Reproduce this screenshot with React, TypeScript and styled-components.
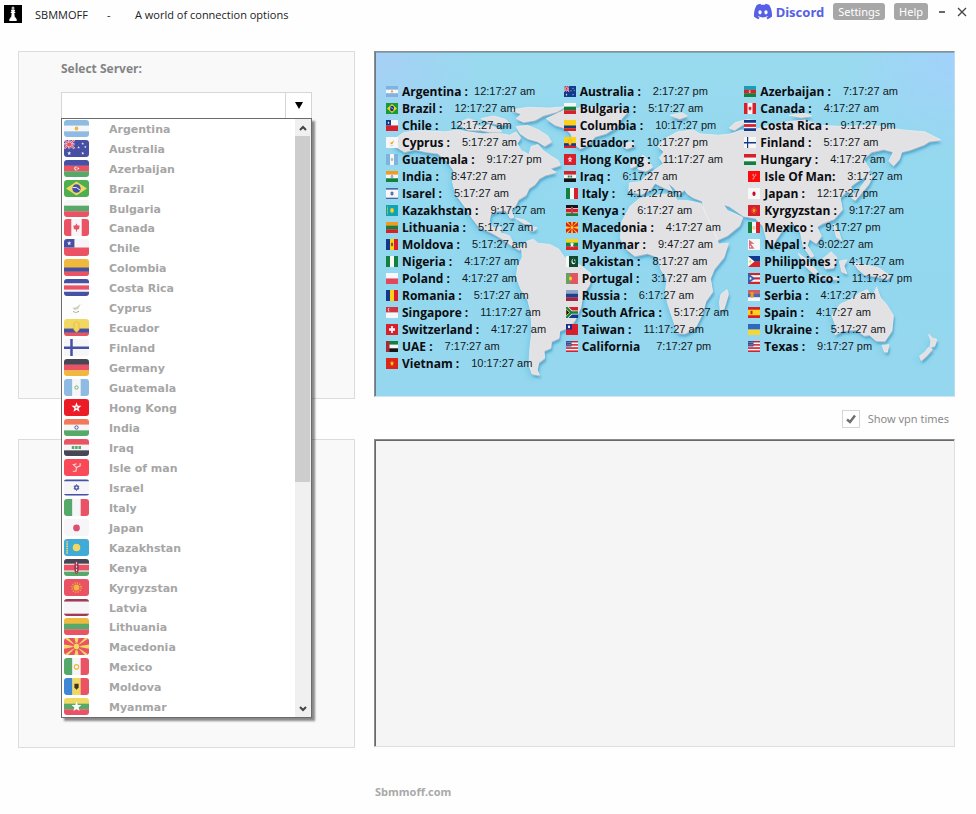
import React, { useState } from 'react';
import styled, { createGlobalStyle } from 'styled-components';
import { SiDiscord } from 'react-icons/si';

const GlobalStyle = createGlobalStyle`
  *, *::before, *::after { box-sizing: border-box; }
  body { margin: 0; background: #fefefe; font-family: "Open Sans", "Noto Sans", sans-serif; }
  button, input, textarea { font: inherit; }
`;

/* ---------- flags ---------- */

type Palette = {
  white: string; red: string; blue: string; sky: string; green: string;
  yellow: string; orange: string; black: string; maroon: string; teal: string;
};

const soft: Palette = {
  white: '#f6f6f8', red: '#ea5364', blue: '#4650a4', sky: '#8fbae2', green: '#56a968',
  yellow: '#f1d862', orange: '#f0b83c', black: '#464655', maroon: '#a03a56', teal: '#3fabd6',
};

const vivid: Palette = {
  white: '#f7f7f7', red: '#d8202c', blue: '#123a8c', sky: '#7fb2e0', green: '#14803e',
  yellow: '#fcd116', orange: '#f39a1f', black: '#151515', maroon: '#b2263c', teal: '#0fa3b5',
};

const rows = (...colors: string[]) =>
  colors.map((c, i) => (
    <rect key={i} x="0" y={(16 / colors.length) * i} width="24" height={16 / colors.length + 0.2} fill={c} />
  ));

const cols = (...colors: string[]) =>
  colors.map((c, i) => (
    <rect key={i} y="0" x={(24 / colors.length) * i} width={24 / colors.length + 0.2} height="16" fill={c} />
  ));

const field = (c: string) => <rect width="24" height="16" fill={c} />;
const star = (cx: number, cy: number, r: number, fill: string) => {
  const pts = Array.from({ length: 10 }, (_, i) => {
    const a = -Math.PI / 2 + (i * Math.PI) / 5;
    const d = i % 2 ? r * 0.42 : r;
    return `${cx + d * Math.cos(a)},${cy + d * Math.sin(a)}`;
  });
  return <polygon points={pts.join(' ')} fill={fill} />;
};
const sun = (r: number, fill: string) => (
  <>
    <circle cx="12" cy="8" r={r + 1.6} fill="none" stroke={fill} strokeWidth="1.4" strokeDasharray="1 1.3" />
    <circle cx="12" cy="8" r={r} fill={fill} />
  </>
);
const bars = (p: Palette) => rows(p.red, p.white, p.red, p.white, p.red, p.white, p.red);

const flags: Record<string, (p: Palette) => React.ReactNode> = {
  ar: p => <>{rows(p.sky, p.white, p.sky)}<circle cx="12" cy="8" r="1.8" fill={p.orange} /></>,
  au: p => (
    <>
      {field(p.blue)}
      <path d="M0 0L10 8M10 0L0 8M5 0V8M0 4H10" stroke={p.white} strokeWidth="2" />
      <path d="M0 0L10 8M10 0L0 8M5 0V8M0 4H10" stroke={p.red} strokeWidth="1" />
      {star(5, 12.5, 2, p.white)}{star(14, 7, 1.3, p.white)}{star(18, 3.5, 1.3, p.white)}
      {star(20.5, 6.5, 1.3, p.white)}{star(18, 12.5, 1.5, p.white)}
    </>
  ),
  az: p => <>{rows(p.blue, p.red, p.green)}<circle cx="11.6" cy="8" r="1.8" fill={p.white} /><circle cx="12.1" cy="8" r="1.2" fill={p.red} />{star(13.8, 8, 1.1, p.white)}</>,
  azv: p => <>{rows(p.teal, p.red, p.green)}<circle cx="11.6" cy="8" r="2" fill={p.white} /><circle cx="12.2" cy="8" r="1.3" fill={p.red} /></>,
  br: p => <>{field(p === soft ? '#4fae50' : '#149b3c')}<path d="M12 1.5L22 8L12 14.5L2 8Z" fill={p.yellow} /><circle cx="12" cy="8" r="4" fill={p.blue} /><path d="M8.3 7Q12 6 15.6 9.6" stroke={p.white} strokeWidth=".9" fill="none" /></>,
  bg: p => rows(p.white, p.green, p.red),
  ca: p => <>{field(p.white)}<rect width="7" height="16" fill={p.red} /><rect x="17" width="7" height="16" fill={p.red} /><path d="M12 4L13 6L15 6L14.5 9.5L12.4 10V12H11.6V10L9.5 9.5L9 6L11 6Z" fill={p.red} /></>,
  cl: p => <>{rows(p.white, p.red)}<rect width="10" height="8" fill={p.blue} />{star(5, 4, 2.2, p.white)}</>,
  co: p => <>{field(p === soft ? p.orange : p.yellow)}<rect y="8" width="24" height="4" fill={p.blue} /><rect y="12" width="24" height="4" fill={p.red} /></>,
  cr: p => <>{field(p.blue)}<rect y="4" width="24" height="8" fill={p.white} /><rect y="6" width="24" height="4" fill={p.red} /></>,
  cy: p => <>{field(p === soft ? '#fdfdfd' : p.white)}<path d="M8 8.5L12 7.5L16 4.5L14 9L10.5 10.5Z" fill={p === soft ? '#cfcfc4' : p.orange} /><path d="M9 11.5Q11 14 15 11" stroke="#8e9c82" fill="none" strokeDasharray="1.4 .8" /></>,
  ec: p => <>{field(p.yellow)}<rect y="9" width="24" height="4" fill={p.blue} /><rect y="13" width="24" height="3" fill={p.red} /><path d="M9.5 4L12 2.5L14.5 4V10L12 12.5L9.5 10Z" fill={p.yellow} stroke={p.orange} strokeWidth=".8" /></>,
  fi: p => <>{field(p.white)}<path d="M0 8.3H24M7.2 0V16" stroke={p.blue} strokeWidth="2.4" /></>,
  de: p => rows(p.black, p.red, p.orange),
  gt: p => <>{cols(p.sky, p.white, p.sky)}<circle cx="12" cy="8" r="1.6" fill={p.white} stroke={p.green} strokeWidth=".8" /></>,
  hk: p => <>{field(p === soft ? '#ec1c26' : p.red)}{star(12, 8, 5, '#fff')}<circle cx="12" cy="8" r="1" fill={p.red} /></>,
  in: p => <>{rows(p === soft ? '#f3795c' : p.orange, p.white, p.green)}<circle cx="12" cy="8" r="1.6" fill="none" stroke={p.blue} strokeWidth=".9" /></>,
  iq: p => <>{rows(p.red, p.white, p.black)}<path d="M7.5 8H16.5" stroke={p.green} strokeWidth="2.6" strokeDasharray="2.4 .8" /></>,
  im: p => <>{field(p === soft ? '#fb4a57' : '#fb0d0d')}<path d="M12 8L9 5.5L12 4.5M12 8L15.5 6.5L15.5 4M12 8L11.5 11.5L8.5 11.5" stroke="#f4d7da" strokeWidth="1.1" fill="none" /></>,
  il: p => <>{field(p.white)}<path d="M0 1.2H24M0 14.8H24" stroke={p.blue} strokeWidth="1.6" /><path d="M12 5.2L14.4 9.4H9.6ZM12 10.9L9.6 6.7H14.4Z" fill="none" stroke={p.blue} strokeWidth=".9" /></>,
  it: p => cols(p.green, p.white, p.red),
  jp: p => <>{field(p.white)}<circle cx="12" cy="8.4" r="3.2" fill={p === soft ? '#dc4f72' : '#bf0a34'} /></>,
  kz: p => <>{field(p.teal)}<circle cx="12" cy="8" r="3.6" fill={p.yellow} /><path d="M3 2V14" stroke={p.yellow} strokeWidth="1.6" strokeDasharray="1.4 .7" /></>,
  ke: p => <>{field(p.white)}<rect width="24" height="4.4" fill={p.black} /><rect y="5.4" width="24" height="5.4" fill={p.red} /><rect y="11.9" width="24" height="4.1" fill={p.green} /><ellipse cx="12" cy="8" rx="2.3" ry="6" fill={p.maroon} /><path d="M12 3V13" stroke={p.white} strokeWidth=".8" strokeDasharray="2 1.2" /></>,
  kg: p => <>{field(p.red)}{sun(2.8, p.orange)}</>,
  lv: p => <>{field(p.white)}<rect width="24" height="2.4" fill={p.maroon} /><rect y="13.8" width="24" height="2.2" fill={p.maroon} /></>,
  lt: p => rows(p.orange, p.green, p.red),
  mk: p => <>{field(p.red)}<path d="M12 8L0 0H4ZM12 8L24 0H20ZM12 8L0 16H4ZM12 8L24 16H20ZM12 8L10 0H14ZM12 8L10 16H14ZM12 8L0 6V10ZM12 8L24 6V10Z" fill={p.yellow} /><circle cx="12" cy="8" r="3.2" fill={p.yellow} stroke={p.red} strokeWidth=".9" /></>,
  mx: p => <>{cols(p.green, p.white, p.red)}<circle cx="12" cy="8.4" r="2.1" fill="none" stroke={p.orange} strokeWidth="1.1" /></>,
  md: p => <>{cols(p === soft ? '#3f86d6' : p.blue, p.yellow, p.red)}<path d="M10 5.5H14V9L12 11L10 9Z" fill={p === soft ? '#3c3520' : '#93541d'} /></>,
  mm: p => <>{rows(p.yellow, p.green, p.red)}{star(12, 8.2, 5, '#fff')}</>,
  hu: p => rows(p.red, p.white, p.green),
  np: p => <>{field(p.white)}<path d="M2 1L13 7H6L13 14H2Z" fill="#d8707c" /><circle cx="5" cy="11" r="1.3" fill={p.white} /></>,
  ng: p => cols(p.green, p.white, p.green),
  pk: p => <>{field('#0b4a2c')}<rect width="6" height="16" fill={p.white} /><circle cx="15" cy="8" r="4" fill={p.white} /><circle cx="16.2" cy="7" r="3.3" fill="#0b4a2c" />{star(17.5, 6, 1.8, p.white)}</>,
  ph: p => <>{rows(p.blue, p.red)}<path d="M0 0L13 8L0 16Z" fill={p.white} /><circle cx="4.4" cy="8" r="1.8" fill={p.yellow} /></>,
  pl: p => rows(p.white, '#e4475c'),
  pt: p => <>{field('#e25563')}<rect width="9" height="16" fill="#6a9d6a" /><circle cx="9" cy="8" r="3" fill={p.yellow} /></>,
  pr: p => <>{rows(p.red, p.white, p.red, p.white, p.red)}<path d="M0 0L14 8L0 16Z" fill="#2f62b5" />{star(5, 8, 3, p.white)}</>,
  ro: p => cols(p.blue, p.yellow, p.red),
  ru: p => rows('#8fa5cb', '#1d3f8e', '#9f2740'),
  rs: p => <>{rows('#d25c66', '#4a69a8', p.white)}<path d="M5 3H11V9L8 12L5 9Z" fill={p.orange} /></>,
  sg: p => <>{rows('#cf3440', p.white)}<circle cx="6" cy="4" r="2.5" fill={p.white} /><circle cx="7.2" cy="4" r="2.1" fill="#cf3440" /></>,
  za: p => <>{rows(p.red, p.blue)}<path d="M0 0L11 8L0 16M11 8H24" stroke={p.white} strokeWidth="6" fill="none" /><path d="M0 0L11 8L0 16M11 8H24" stroke={p.green} strokeWidth="3.6" fill="none" /><path d="M0 3L7 8L0 13Z" fill={p.black} stroke={p.yellow} strokeWidth="1" /></>,
  es: p => <>{field(p.red)}<rect y="4" width="24" height="8" fill={p.yellow} /><rect x="5" y="5.5" width="4" height="5" fill={p.maroon} /></>,
  ch: p => <>{field(p.red)}<path d="M12 3V13M6 8H18" stroke={p.white} strokeWidth="3.4" /></>,
  tw: p => <>{field(p.red)}<rect width="12" height="8" fill="#1c2c8c" /><circle cx="6" cy="4" r="2.2" fill={p.white} /></>,
  ua: p => rows('#2c6ac0', '#f2d63c'),
  ae: p => <>{rows(p.green, p.white, p.black)}<rect width="7" height="16" fill="#a92935" /></>,
  us: p => <>{bars(p)}<rect width="11" height="8" fill="#3b4b8e" /><path d="M1.5 2.2H10M1.5 5.6H10" stroke={p.white} strokeWidth="1" strokeDasharray="1.2 1" /></>,
  vn: p => <>{field('#dc2519')}{star(12, 8, 4.6, p.yellow)}</>,
};

const FlagSvg = styled.svg<{ $small?: boolean }>`
  display: block;
  flex: none;
  width: ${p => (p.$small ? 12 : 25)}px;
  height: ${p => (p.$small ? 11 : 17)}px;
  border-radius: ${p => (p.$small ? 0 : 3)}px;
`;

const Flag = ({ code, small }: { code: string; small?: boolean }) => (
  <FlagSvg $small={small} viewBox="0 0 24 16" preserveAspectRatio="none" aria-hidden="true">
    {flags[code](small ? vivid : soft)}
  </FlagSvg>
);

/* ---------- data ---------- */

const servers: [string, string][] = [
  ['ar', 'Argentina'], ['au', 'Australia'], ['az', 'Azerbaijan'], ['br', 'Brazil'], ['bg', 'Bulgaria'],
  ['ca', 'Canada'], ['cl', 'Chile'], ['co', 'Colombia'], ['cr', 'Costa Rica'], ['cy', 'Cyprus'],
  ['ec', 'Ecuador'], ['fi', 'Finland'], ['de', 'Germany'], ['gt', 'Guatemala'], ['hk', 'Hong Kong'],
  ['in', 'India'], ['iq', 'Iraq'], ['im', 'Isle of man'], ['il', 'Israel'], ['it', 'Italy'],
  ['jp', 'Japan'], ['kz', 'Kazakhstan'], ['ke', 'Kenya'], ['kg', 'Kyrgyzstan'], ['lv', 'Latvia'],
  ['lt', 'Lithuania'], ['mk', 'Macedonia'], ['mx', 'Mexico'], ['md', 'Moldova'], ['mm', 'Myanmar'],
];
const compactRows = ['bg', 'lv'];

type Clock = [code: string, name: string, time: string];
const clockColumns: { indentFrom: number; items: Clock[] }[] = [
  {
    indentFrom: 99,
    items: [
      ['ar', 'Argentina :', '12:17:27 am'], ['br', 'Brazil :', '12:17:27 am'], ['cl', 'Chile :', '12:17:27 am'],
      ['cy', 'Cyprus :', '5:17:27 am'], ['gt', 'Guatemala :', '9:17:27 pm'], ['in', 'India :', '8:47:27 am'],
      ['il', 'Isarel :', '5:17:27 am'], ['kz', 'Kazakhstan :', '9:17:27 am'], ['lt', 'Lithuania :', '5:17:27 am'],
      ['md', 'Moldova :', '5:17:27 am'], ['ng', 'Nigeria :', '4:17:27 am'], ['pl', 'Poland :', '4:17:27 am'],
      ['ro', 'Romania :', '5:17:27 am'], ['sg', 'Singapore :', '11:17:27 am'], ['ch', 'Switzerland :', '4:17:27 am'],
      ['ae', 'UAE :', '7:17:27 am'], ['vn', 'Vietnam :', '10:17:27 am'],
    ],
  },
  {
    indentFrom: 6,
    items: [
      ['au', 'Australia :', '2:17:27 pm'], ['bg', 'Bulgaria :', '5:17:27 am'], ['co', 'Columbia :', '10:17:27 pm'],
      ['ec', 'Ecuador :', '10:17:27 pm'], ['hk', 'Hong Kong :', '11:17:27 am'], ['iq', 'Iraq :', '6:17:27 am'],
      ['it', 'Italy :', '4:17:27 am'], ['ke', 'Kenya :', '6:17:27 am'], ['mk', 'Macedonia :', '4:17:27 am'],
      ['mm', 'Myanmar :', '9:47:27 am'], ['pk', 'Pakistan :', '8:17:27 am'], ['pt', 'Portugal :', '3:17:27 am'],
      ['ru', 'Russia :', '6:17:27 am'], ['za', 'South Africa :', '5:17:27 am'], ['tw', 'Taiwan :', '11:17:27 am'],
      ['us', 'California', '7:17:27 pm'],
    ],
  },
  {
    indentFrom: 5,
    items: [
      ['azv', 'Azerbaijan :', '7:17:27 am'], ['ca', 'Canada :', '4:17:27 am'], ['cr', 'Costa Rica :', '9:17:27 pm'],
      ['fi', 'Finland :', '5:17:27 am'], ['hu', 'Hungary :', '4:17:27 am'], ['im', 'Isle Of Man:', '3:17:27 am'],
      ['jp', 'Japan :', '12:17:27 pm'], ['kg', 'Kyrgyzstan :', '9:17:27 am'], ['mx', 'Mexico :', '9:17:27 pm'],
      ['np', 'Nepal :', '9:02:27 am'], ['ph', 'Philippines :', '4:17:27 am'], ['pr', 'Puerto Rico :', '11:17:27 pm'],
      ['rs', 'Serbia :', '4:17:27 am'], ['es', 'Spain :', '4:17:27 am'], ['ua', 'Ukraine :', '5:17:27 am'],
      ['us', 'Texas :', '9:17:27 pm'],
    ],
  },
];

/* ---------- page ---------- */

const Window = styled.div`
  min-height: 100vh;
  background: #fefefe;
`;

const TitleBar = styled.header`
  display: flex;
  justify-content: space-between;
  align-items: flex-start;
  height: 28px;
  padding: 0 9px 0 4px;
`;

const Brand = styled.div`
  display: flex;
  align-items: center;
  height: 28px;
  font-size: 11px;
  color: #222;
`;

const BrandIcon = styled.svg`
  width: 18px;
  height: 18px;
  margin-right: 13px;
  background: #000;
`;

const AppName = styled.span`
  width: 72px;
`;

const Dash = styled.span`
  width: 28px;
`;

const Actions = styled.nav`
  display: flex;
  align-items: center;
  height: 23px;
`;

const DiscordLink = styled.a`
  display: flex;
  align-items: center;
  gap: 4px;
  margin-right: 9px;
  color: #5560e6;
  font: 700 13px/18px "Noto Sans", sans-serif;
  text-decoration: none;

  & > svg {
    width: 18px;
    height: 17px;
  }
`;

const Pill = styled.button`
  height: 17px;
  margin-right: 9px;
  padding: 0 5px;
  border: 0;
  border-radius: 3px;
  background: #a7a7a7;
  color: #fff;
  font: 11px/16px "Noto Sans", sans-serif;
`;

const WindowButton = styled.button`
  display: flex;
  align-items: center;
  justify-content: center;
  width: 10px;
  height: 18px;
  padding: 0;
  border: 0;
  background: none;
  color: #444;

  & + & { margin-left: 10px; }
`;

const Main = styled.main`
  display: grid;
  grid-template-columns: 337fr 581fr;
  column-gap: 19px;
  padding: 23px 21px 0 18px;
`;

const Column = styled.div<{ $gap?: number }>`
  display: flex;
  flex-direction: column;
  gap: ${p => p.$gap ?? 0}px;
  min-width: 0;
`;

const Panel = styled.section<{ $height: number }>`
  min-height: ${p => p.$height}px;
  padding: 8px 42px 0;
  border: 1px solid #dcdcdc;
  background: #f9f9f9;
`;

const FieldLabel = styled.label`
  display: block;
  height: 32px;
  color: #848484;
  font: 700 12px/18px "Open Sans", sans-serif;
`;

const Combo = styled.div`
  position: relative;
  display: flex;
  height: 27px;
  border: 1px solid #d6d6d6;
  background: #fff;
`;

const ComboInput = styled.input`
  flex: 1;
  min-width: 0;
  padding: 0 6px;
  border: 0;
  outline: 0;
  background: transparent;
  font-size: 12px;
`;

const ComboButton = styled.button`
  display: flex;
  align-items: center;
  justify-content: center;
  width: 26px;
  padding: 0;
  border: 0;
  border-left: 1px solid #d6d6d6;
  background: #fff;
`;

const Dropdown = styled.div`
  position: absolute;
  z-index: 2;
  top: 25px;
  left: -1px;
  right: -1px;
  display: flex;
  border: 1px solid #6b6b6b;
  background: #fff;
  box-shadow: 3px 3px 2px rgba(0, 0, 0, 0.45);
`;

const Options = styled.ul`
  flex: 1;
  margin: 0;
  padding: 0;
  list-style: none;
`;

const Option = styled.li<{ $compact: boolean }>`
  display: flex;
  align-items: flex-start;
  gap: 20px;
  height: ${p => (p.$compact ? 19 : 20)}px;
  padding: 1px 0 0 2px;
  overflow: hidden;
  color: #a6a6a6;
  font: 700 11px/19px "DejaVu Sans", Verdana, sans-serif;
`;

const ScrollTrack = styled.div`
  display: flex;
  flex-direction: column;
  width: 16px;
  background: #f0f0f0;
`;

const ScrollButton = styled.button`
  display: flex;
  align-items: center;
  justify-content: center;
  height: 17px;
  padding: 0;
  border: 0;
  background: #f0f0f0;
`;

const Thumb = styled.div`
  flex: 346 0 0;
  margin-right: 1px;
  background: #cdcdcd;
`;

const TrackRest = styled.div`
  flex: 218 0 0;
`;

const MapPanel = styled.section`
  position: relative;
  height: 346px;
  border: 1px solid;
  border-color: #8a8f94 #b9dcf0 #cfe6f2 #8a8f94;
  box-shadow: inset 1px 0 0 #6c7a84, inset 0 1px 0 #80a9bd;
  background:
    radial-gradient(circle at 0 0, rgba(170, 205, 248, 0.8), transparent 110px),
    radial-gradient(circle at 100% 0, rgba(165, 207, 255, 0.8), transparent 110px),
    linear-gradient(#99daee, #92d8ef 50%, #95d7ee);
`;

const WorldMap = styled.svg`
  position: absolute;
  inset: 1px;
  width: calc(100% - 2px);
  height: calc(100% - 2px);
`;

const Clocks = styled.div`
  position: relative;
  display: grid;
  grid-template-columns: 178fr 181fr 210fr;
  padding: 31px 0 0 11px;
`;

const ClockList = styled.ul`
  margin: 0;
  padding: 0;
  list-style: none;
`;

const ClockRow = styled.li<{ $indent: number; $gap: number }>`
  display: flex;
  align-items: center;
  height: 17px;
  padding-left: ${p => p.$indent}px;
  white-space: nowrap;

  & > b {
    margin: 0 ${p => p.$gap}px 0 4px;
    color: #0c0c10;
    font: 700 12px/17px "Open Sans", sans-serif;
  }
  & > time {
    color: #14181c;
    font: 11px/17px "Liberation Sans", Arial, sans-serif;
  }
`;

const CheckRow = styled.label`
  display: flex;
  align-items: center;
  justify-content: flex-end;
  gap: 8px;
  height: 42px;
  padding: 2px 6px 0 0;
  color: #8b8b8b;
  font: 11px/18px "Noto Sans", sans-serif;
`;

const CheckBox = styled.span`
  position: relative;
  display: flex;
  align-items: center;
  justify-content: center;
  width: 18px;
  height: 18px;

  & > input {
    appearance: none;
    position: absolute;
    inset: 0;
    margin: 0;
    border: 1px solid #d6d6d6;
    background: #fff;
  }
  & > svg { position: relative; pointer-events: none; }
`;

const LogBox = styled.textarea`
  display: block;
  width: 100%;
  height: 308px;
  resize: none;
  outline: 0;
  border: 1px solid;
  border-color: #8c8c8c #dedede #dedede #8c8c8c;
  box-shadow: inset 1px 1px 0 #696969;
  background: #f5f5f5;
`;

const Footer = styled.footer`
  display: flex;
  padding: 35px 21px 0 375px;

  & > a {
    color: #a9a9a9;
    font: 700 11px/18px "Open Sans", sans-serif;
    text-decoration: none;
  }
`;

const land = [
  // North America
  'M60 300L78 292L72 278L90 264L130 258L200 262L235 256L262 262L300 268L345 266L372 272L390 262L402 280L392 296L404 318L424 330L430 306L448 300L462 318L482 334L502 348L508 362L480 372L496 384L468 392L452 402L440 420L424 432L416 452L396 466L388 484L376 496L384 520L374 522L362 498L340 500L322 508L318 532L330 552L350 548L348 566L372 576L384 600L404 612L398 618L376 604L352 584L324 566L290 548L272 522L252 486L228 450L220 412L224 380L206 350L180 326L150 322L118 314L92 322Z',
  // Arctic islands
  'M232 236L262 222L290 232L270 240L300 246L316 240L340 250L352 262L320 262L296 256L262 256Z',
  'M296 222L330 214L360 224L376 238L352 240L320 234Z',
  'M390 246L420 242L450 256L474 274L484 292L466 304L446 290L420 282L400 266Z',
  'M376 196L420 188L480 190L520 186L500 200L462 212L440 226L410 232L390 222L404 208Z',
  // Greenland
  'M470 222L520 196L580 186L640 188L690 198L672 220L658 246L630 266L600 276L582 300L560 312L544 296L536 268L520 250L492 240Z',
  // Caribbean
  'M388 522L412 528L428 540L410 538Z',
  'M426 546L446 552L436 560L422 556Z',
  // South America
  'M404 612L418 592L436 586L448 598L480 602L504 616L520 642L560 664L590 690L586 722L568 752L562 792L546 832L530 852L506 862L504 884L484 894L482 914L464 922L466 944L450 958L446 980L452 996L432 992L424 966L426 920L432 860L428 800L420 768L402 736L390 700L394 668L406 640Z',
  // Africa
  'M694 486L720 462L770 452L808 448L820 468L850 470L884 478L900 520L922 572L930 600L956 598L944 640L918 676L908 704L914 744L896 772L886 812L868 852L840 870L820 868L808 828L794 780L788 744L792 706L776 678L768 640L740 628L706 636L684 616L668 584L670 536Z',
  'M932 776L936 752L952 738L956 752L944 796L934 800Z',
  // Europe and Asia
  'M690 440L692 416L722 412L738 394L760 376L782 358L772 340L784 322L768 306L784 284L820 262L862 256L880 268L930 272L962 268L990 256L1010 262L1052 246L1110 232L1160 226L1200 242L1262 246L1340 242L1420 256L1480 262L1522 286L1492 290L1478 300L1440 316L1418 322L1412 344L1396 364L1384 350L1396 322L1370 314L1338 322L1316 344L1334 376L1318 398L1296 414L1282 426L1290 450L1272 440L1254 460L1260 496L1238 524L1206 538L1192 548L1204 576L1190 598L1172 584L1166 604L1184 636L1176 640L1156 610L1148 566L1128 536L1104 552L1082 588L1072 614L1058 588L1048 546L1028 522L996 516L958 486L942 480L954 500L976 510L994 520L986 544L954 574L926 588L908 540L890 494L886 470L862 460L846 448L838 436L824 452L812 432L794 414L806 440L784 430L760 416L748 436L724 450Z',
  // British Isles and Iceland
  'M714 374L726 360L716 346L728 332L742 346L754 368L736 380Z',
  'M694 356L708 346L710 364L696 370Z',
  'M668 300L700 292L706 304L684 312Z',
  // Northern islands
  'M800 212L832 204L846 214L826 222Z',
  'M958 250L974 234L1008 224L1026 228L996 238L972 256Z',
  'M1118 212L1160 206L1178 214L1150 218Z',
  // Japan
  'M1326 380L1340 396L1330 420L1312 444L1294 468L1284 460L1306 434L1322 408Z',
  // Southeast Asia
  'M1142 628L1166 648L1194 684L1186 692L1162 668Z',
  'M1206 646L1230 624L1246 642L1236 672L1214 674Z',
  'M1196 696L1230 698L1250 706L1222 708Z',
  'M1252 652L1272 648L1264 666L1272 690L1258 684Z',
  'M1236 540L1250 560L1258 590L1244 580Z',
  'M1290 656L1322 664L1356 672L1388 696L1380 706L1350 698L1318 692L1300 674Z',
  // Australia
  'M1232 815L1254 782L1282 768L1303 750L1326 738L1340 762L1351 730L1362 762L1380 786L1396 815L1392 862L1373 893L1350 892L1332 874L1318 876L1296 858L1260 862L1240 874L1242 848Z',
  'M1366 906L1384 904L1380 926L1372 926Z',
  // New Zealand
  'M1490 872L1500 884L1512 888L1506 908L1494 912L1496 894Z',
  'M1490 912L1500 918L1484 938L1470 952L1466 938L1480 926Z',
].join('');

const World = () => (
  <WorldMap viewBox="16 24 1539 1032" preserveAspectRatio="none" aria-hidden="true">
    <defs>
      <filter id="relief" x="-5%" y="-5%" width="110%" height="110%">
        <feDropShadow dx="3" dy="6" stdDeviation="3" floodColor="#3f9dc8" floodOpacity="0.75" />
      </filter>
      <filter id="glow" x="-5%" y="-5%" width="110%" height="110%">
        <feGaussianBlur stdDeviation="9" />
      </filter>
    </defs>
    <path d={land} fill="#62bfe4" opacity="0.6" filter="url(#glow)" transform="translate(-6 10)" />
    <path d={land} fill="#b3bac2" filter="url(#relief)" transform="translate(1 4)" />
    <path d={land} fill="#e2e2e4" stroke="#eeeef0" strokeWidth="2" strokeLinejoin="round" />
  </WorldMap>
);

export default function App() {
  const [server, setServer] = useState('');
  const [showTimes, setShowTimes] = useState(true);

  return (
    <Window>
      <GlobalStyle />
      <TitleBar>
        <Brand>
          <BrandIcon viewBox="0 0 18 18" aria-hidden="true">
            <path d="M8.5 1.5h1v1h1v1h-1v1.200h1.700l-.8 2.200h.9v1.200h-1l.6 4.400h1v1.300h.8V16H5.300v-2.200h.8v-1.300h1l.6-4.400h-1V6.900h.9l-.8-2.200h1.700V3.500h-1v-1h1z" fill="#fff" />
          </BrandIcon>
          <AppName>SBMMOFF</AppName>
          <Dash>-</Dash>
          <span>A world of connection options</span>
        </Brand>
        <Actions>
          <DiscordLink href="#discord">
            <SiDiscord viewBox="0 2 24 20" preserveAspectRatio="none" />
            Discord
          </DiscordLink>
          <Pill type="button">Settings</Pill>
          <Pill type="button">Help</Pill>
          <WindowButton type="button" aria-label="Minimize">
            <svg width="8" height="8" viewBox="0 0 8 8"><path d="M1 4H7" stroke="currentColor" strokeWidth="1.6" /></svg>
          </WindowButton>
          <WindowButton type="button" aria-label="Close">
            <svg width="10" height="10" viewBox="0 0 10 10"><path d="M1 1L9 9M9 1L1 9" stroke="currentColor" strokeWidth="1.3" /></svg>
          </WindowButton>
        </Actions>
      </TitleBar>

      <Main>
        <Column $gap={40}>
          <Panel $height={348}>
            <FieldLabel htmlFor="server">Select Server:</FieldLabel>
            <Combo>
              <ComboInput
                id="server"
                role="combobox"
                aria-expanded="true"
                aria-controls="server-list"
                value={server}
                onChange={e => setServer(e.target.value)}
              />
              <ComboButton type="button" aria-label="Open server list">
                <svg width="8" height="7" viewBox="0 0 8 7"><path d="M0 0H8L4 7Z" /></svg>
              </ComboButton>
              <Dropdown>
                <Options id="server-list" role="listbox">
                  {servers.map(([code, name]) => (
                    <Option
                      key={code}
                      role="option"
                      aria-selected={server === name}
                      $compact={compactRows.includes(code)}
                      onClick={() => setServer(name)}
                    >
                      <Flag code={code} />
                      {name}
                    </Option>
                  ))}
                </Options>
                <ScrollTrack>
                  <ScrollButton type="button" aria-label="Scroll up">
                    <svg width="8" height="6" viewBox="0 0 8 6"><path d="M1 5L4 2L7 5" stroke="#444" strokeWidth="2" fill="none" /></svg>
                  </ScrollButton>
                  <Thumb />
                  <TrackRest />
                  <ScrollButton type="button" aria-label="Scroll down">
                    <svg width="8" height="6" viewBox="0 0 8 6"><path d="M1 1L4 4L7 1" stroke="#444" strokeWidth="2" fill="none" /></svg>
                  </ScrollButton>
                </ScrollTrack>
              </Dropdown>
            </Combo>
          </Panel>
          <Panel $height={309} />
        </Column>

        <Column>
          <MapPanel>
            <World />
            {showTimes && (
              <Clocks>
                {clockColumns.map((column, c) => (
                  <ClockList key={c}>
                    {column.items.map(([code, name, time], i) => (
                      <ClockRow
                        key={name}
                        $indent={i >= column.indentFrom ? c * 2 : 0}
                        $gap={name === 'Argentina :' ? 6 : name === 'California' ? 16 : 12}
                      >
                        <Flag code={code} small />
                        <b>{name}</b>
                        <time>{time}</time>
                      </ClockRow>
                    ))}
                  </ClockList>
                ))}
              </Clocks>
            )}
          </MapPanel>
          <CheckRow>
            <CheckBox>
              <input type="checkbox" checked={showTimes} onChange={e => setShowTimes(e.target.checked)} />
              {showTimes && (
                <svg width="10" height="10" viewBox="0 0 10 10"><path d="M1 5.500L4 8L9 1.500" stroke="#6d6d6d" strokeWidth="2.4" fill="none" /></svg>
              )}
            </CheckBox>
            Show vpn times
          </CheckRow>
          <LogBox aria-label="Connection log" readOnly />
        </Column>
      </Main>
      <Footer><a href="#home">Sbmmoff.com</a></Footer>
    </Window>
  );
}
